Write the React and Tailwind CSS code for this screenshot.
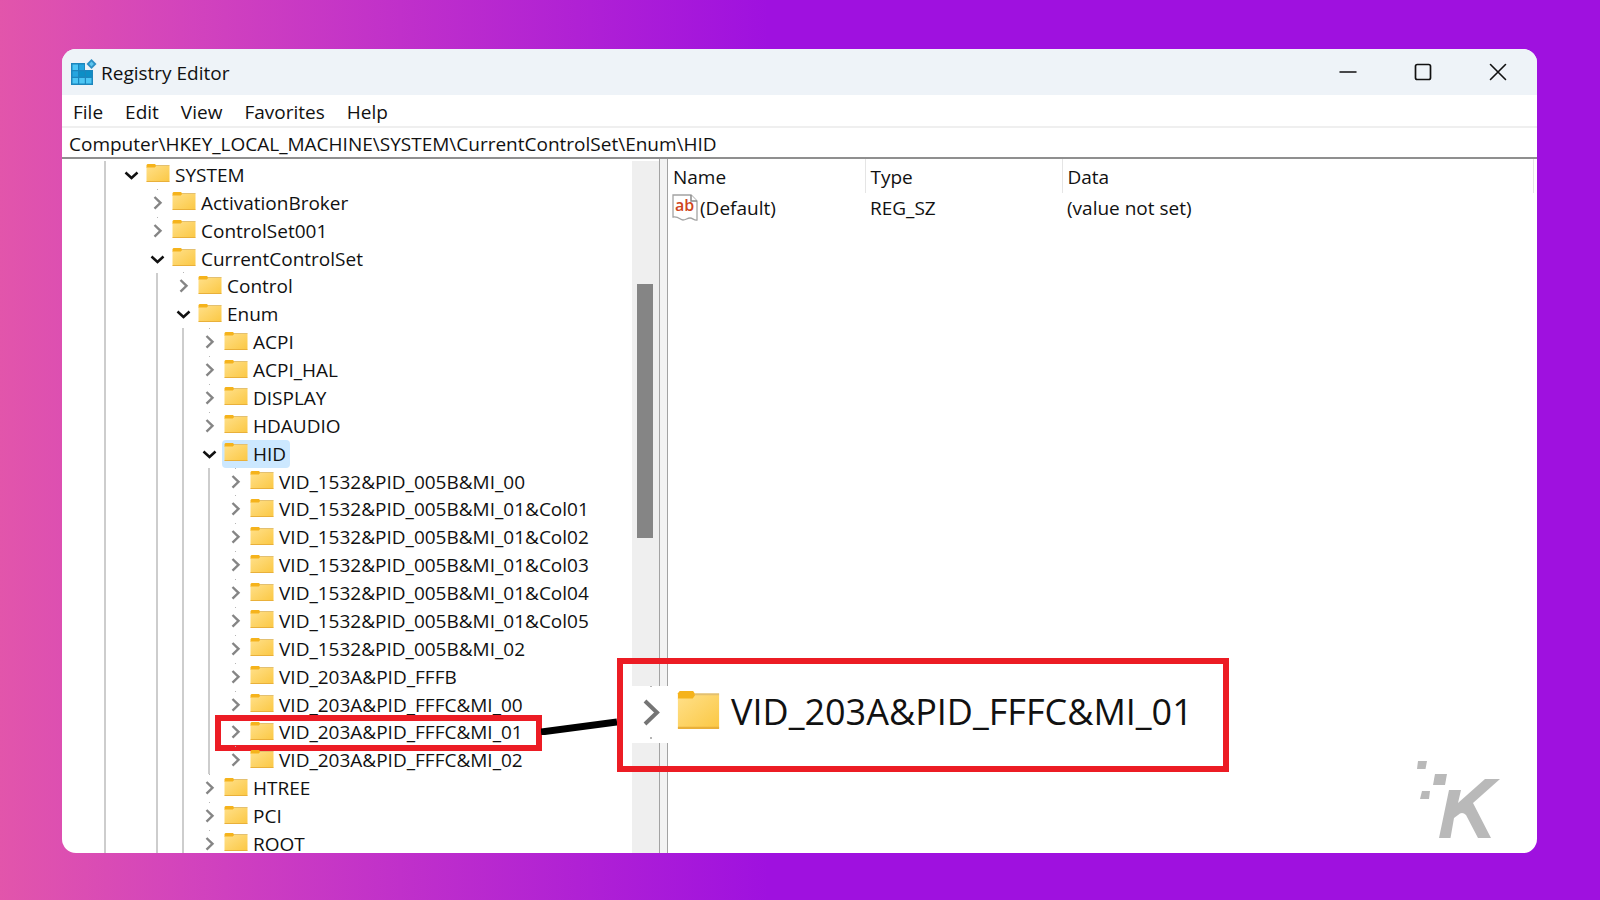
import React from "react";

const menuItems = ["File", "Edit", "View", "Favorites", "Help"];

const treeRows = [
  { name: "SYSTEM", depth: 0, open: true },
  { name: "ActivationBroker", depth: 1 },
  { name: "ControlSet001", depth: 1 },
  { name: "CurrentControlSet", depth: 1, open: true },
  { name: "Control", depth: 2 },
  { name: "Enum", depth: 2, open: true },
  { name: "ACPI", depth: 3 },
  { name: "ACPI_HAL", depth: 3 },
  { name: "DISPLAY", depth: 3 },
  { name: "HDAUDIO", depth: 3 },
  { name: "HID", depth: 3, open: true, selected: true },
  { name: "VID_1532&PID_005B&MI_00", depth: 4 },
  { name: "VID_1532&PID_005B&MI_01&Col01", depth: 4 },
  { name: "VID_1532&PID_005B&MI_01&Col02", depth: 4 },
  { name: "VID_1532&PID_005B&MI_01&Col03", depth: 4 },
  { name: "VID_1532&PID_005B&MI_01&Col04", depth: 4 },
  { name: "VID_1532&PID_005B&MI_01&Col05", depth: 4 },
  { name: "VID_1532&PID_005B&MI_02", depth: 4 },
  { name: "VID_203A&PID_FFFB", depth: 4 },
  { name: "VID_203A&PID_FFFC&MI_00", depth: 4 },
  { name: "VID_203A&PID_FFFC&MI_01", depth: 4, marked: true },
  { name: "VID_203A&PID_FFFC&MI_02", depth: 4 },
  { name: "HTREE", depth: 3 },
  { name: "PCI", depth: 3 },
  { name: "ROOT", depth: 3 },
];

const RegistryIcon = () => (
  <svg viewBox="0 0 26 26" className="h-[26px] w-[26px]" aria-hidden="true">
    <path d="M0 4h14v7h8v15H0z" fill="#1c86bd" />
    <path d="M1.500 5.500h5.500v5.500H1.500zM1.500 19h5.500v5.500H1.500zM8.200 19h5.600v5.500H8.200zM15 19h5.500v5.500H15z" fill="#4cc6f5" />
    <path d="M8.200 5.500h5v5.500h-5zM1.500 12.200h5.500v5.600H1.500z" fill="#25a5df" />
    <path d="M8.200 12.200h5.600v5.600H8.200zM15 12.200h5.500v5.600H15z" fill="#0c8fc6" />
    <path d="M20.500 0l5 5-5 5-5-5z" fill="#2c8fc4" />
    <path d="M20.500 2.600l2.400 2.400-2.400 2.400-2.400-2.400z" fill="#5cc4ee" />
  </svg>
);

const FolderIcon = ({ id, className }) => (
  <svg viewBox="0 0 24 20" preserveAspectRatio="none" className={className} aria-hidden="true">
    <defs>
      <linearGradient id={id} x1="0" y1="0" x2="1" y2="1">
        <stop offset="0" stopColor="#ffe08a" />
        <stop offset="1" stopColor="#fbc844" />
      </linearGradient>
    </defs>
    <path d="M1.500 1h7.500l1.200 1.500V5H0.500V2z" fill="#f5b31c" />
    <path d="M0.500 4.500h8.300l1.700-2H23a0.500 0.500 0 0 1 .5.5v15.500H0.500z" fill={`url(#${id})`} />
    <path d="M10.200 2h13.300v1H9.600z" fill="#e3c070" />
    <path d="M0.500 18h23v1h-23z" fill="#e9b03a" />
  </svg>
);

const Chevron = ({ open }) => (
  <svg viewBox="0 0 26 28" className="h-7 w-[26px]" fill="none" aria-hidden="true">
    {open ? (
      <path d="M7.500 11.500l6 5.500 6-5.500" stroke="#111" strokeWidth="2.500" />
    ) : (
      <>
        <path d="M10.500 8l6 5.800-6 5.800" stroke="#858585" strokeWidth="2.400" />
        <path d="M13 0h1v1h-1z" fill="#b5b5b5" />
      </>
    )}
  </svg>
);

const Guide = ({ line }) => (
  <span className="flex w-[26px] shrink-0 justify-center self-stretch">
    {line && <span className="w-0.5 bg-[#cdcdcd]" />}
  </span>
);

const TreeRow = ({ row, index }) => (
  <li
    role="treeitem"
    aria-expanded={Boolean(row.open)}
    aria-selected={Boolean(row.selected)}
    className="relative flex min-h-0 flex-1 items-center pl-[30px]"
  >
    <Guide line />
    {Array.from({ length: row.depth }, (_, level) => (
      <Guide key={level} line={level > 0} />
    ))}
    <button type="button" aria-label={`Toggle ${row.name}`} className="shrink-0">
      <Chevron open={row.open} />
    </button>
    <span
      className={
        row.selected
          ? "flex h-7 items-center gap-[5px] rounded-sm bg-[#cce8ff] pr-1 pl-0.5"
          : "flex h-7 items-center gap-[5px] pr-1 pl-0.5"
      }
    >
      <FolderIcon id={`folder-${index}`} className="mb-[3px] h-5 w-6 shrink-0" />
      <span className="leading-4 whitespace-nowrap">{row.name}</span>
    </span>
    {row.marked && (
      <>
        <span className="absolute -top-1 -bottom-[5px] left-[153px] w-[327px] border-[6px] border-[#ec1c24]" />
        <svg viewBox="0 0 76 24" className="absolute -top-2 left-[479px] h-6 w-[76px]" aria-hidden="true">
          <path d="M0 21L76 11" stroke="#000" strokeWidth="7" />
        </svg>
      </>
    )}
  </li>
);

const StringValueIcon = () => (
  <svg viewBox="0 0 26 28" className="h-7 w-[26px] shrink-0" aria-hidden="true">
    <path
      d="M1 1h18l6 6v19c-3 .8-4-2-7-2s-4 2-7 2-4-4-10-3z"
      fill="#fff"
      stroke="#a3a3a3"
      strokeWidth="1.300"
    />
    <path d="M19 1v6h6" fill="#fff" stroke="#8a8a8a" strokeWidth="1.500" />
    <text x="3" y="17" fontSize="16" fontWeight="600" fill="#cf4520">
      ab
    </text>
  </svg>
);

const TitleBar = () => (
  <header className="flex h-[46px] shrink-0 items-center bg-[#eef3f8] pr-0.5 pl-[9px]">
    <RegistryIcon />
    <h1 className="flex-1 pt-0.5 pl-1">Registry Editor</h1>
    <button type="button" aria-label="Minimize" className="flex h-full w-[75px] items-center justify-center">
      <svg viewBox="0 0 18 18" className="h-[18px] w-[18px]" aria-hidden="true">
        <path d="M1 9h16" stroke="#111" strokeWidth="1.500" strokeLinecap="round" />
      </svg>
    </button>
    <button type="button" aria-label="Maximize" className="flex h-full w-[75px] items-center justify-center">
      <svg viewBox="0 0 18 18" className="h-[18px] w-[18px]" aria-hidden="true">
        <rect x="1.500" y="1.500" width="15" height="15" rx="1.800" fill="none" stroke="#111" strokeWidth="1.700" />
      </svg>
    </button>
    <button type="button" aria-label="Close" className="flex h-full w-[75px] items-center justify-center">
      <svg viewBox="0 0 18 18" className="h-[18px] w-[18px]" aria-hidden="true">
        <path d="M1.500 1.500l15 15M16.500 1.500l-15 15" stroke="#111" strokeWidth="1.600" strokeLinecap="round" />
      </svg>
    </button>
  </header>
);

const ValueTable = () => (
  <table className="w-full table-fixed border-collapse text-left">
    <colgroup>
      <col className="w-[197px]" />
      <col className="w-[197px]" />
      <col />
    </colgroup>
    <thead>
      <tr className="h-[34px]">
        <th className="border-r border-[#e5e5e5] pt-0.5 pl-[5px] font-normal">Name</th>
        <th className="border-r border-[#e5e5e5] pt-0.5 pl-[5px] font-normal">Type</th>
        <th className="border-r border-[#e5e5e5] pt-0.5 pl-[5px] font-normal">Data</th>
      </tr>
    </thead>
    <tbody>
      <tr className="h-[30px]">
        <td className="pl-1">
          <span className="flex items-center gap-0.5">
            <StringValueIcon />
            (Default)
          </span>
        </td>
        <td className="pl-[5px]">REG_SZ</td>
        <td className="pl-[5px]">(value not set)</td>
      </tr>
    </tbody>
  </table>
);

/* Enlarged copy of the marked key, laid over both panes */
const Callout = () => (
  <aside className="absolute bottom-[81px] left-[555px] flex h-[114px] w-[612px] items-center border-[6px] border-[#ec1c24] pb-0.5 pl-[9px]">
    <span className="flex h-[57px] w-full items-center bg-white">
      <svg viewBox="0 0 38 57" className="h-[57px] w-[38px] shrink-0" fill="none" aria-hidden="true">
        <path d="M13 15l12 11.500L13 38" stroke="#757575" strokeWidth="4" />
        <path d="M18 0h2v1h-2zM18 51h2v2h-2z" fill="#b5b5b5" />
      </svg>
      <FolderIcon id="folder-callout" className="mb-2 ml-[7px] h-[42px] w-[43px] shrink-0" />
      <span className="pb-1 pl-[11px] text-[36px] leading-none whitespace-nowrap">VID_203A&PID_FFFC&MI_01</span>
    </span>
  </aside>
);

const Watermark = () => (
  <svg viewBox="0 0 84 80" className="absolute right-9 bottom-3.5 h-20 w-[84px]" fill="#b9b9b9" aria-hidden="true">
    <path d="M1 2h9l-1.500 8H0z" />
    <path d="M18 15h12l-2 11H16z" />
    <path d="M5 32h8l-1 8H3z" />
    <path d="M32 31h12l-3 13 27-24h15L56 44l18 35H61L49 56q-4-4-8 0l-4 3-3.500 20H22z" />
  </svg>
);

const App = () => {
  return (
    <div className="flex h-screen min-h-[600px] flex-col bg-[linear-gradient(90deg,#e255ab_0%,#d243bd_12%,#c030ca_25%,#9f11df_48%)] pt-[49px] pr-[63px] pb-[47px] pl-[62px] font-['Open_Sans',sans-serif] text-[19px] leading-7 text-[#111]">
      <main className="relative flex min-h-0 flex-1 flex-col overflow-hidden rounded-[14px] bg-white">
        <TitleBar />

        {/* Menu */}
        <nav className="flex h-[33px] shrink-0 items-center gap-[22px] border-b-2 border-[#efefef] pt-0.5 pl-[11px]">
          {menuItems.map((item) => (
            <button key={item} type="button">
              {item}
            </button>
          ))}
        </nav>

        {/* Address bar */}
        <input
          type="text"
          aria-label="Address"
          defaultValue="Computer\HKEY_LOCAL_MACHINE\SYSTEM\CurrentControlSet\Enum\HID"
          className="h-[31px] w-full shrink-0 border-b-2 border-[#8f8f8f] pt-0.5 pl-[7px] outline-none"
        />

        <div className="flex min-h-0 flex-1">
          {/* Key tree */}
          <ul role="tree" className="-mb-[5px] flex w-[570px] shrink-0 flex-col pt-0.5">
            {treeRows.map((row, index) => (
              <TreeRow key={row.name} row={row} index={index} />
            ))}
          </ul>
          <div className="mt-0.5 flex w-[27px] shrink-0 flex-col items-start bg-[#efefef] pt-[123px] pl-[5px]">
            <div className="h-[254px] w-4 bg-[#858585]" />
          </div>
          <div className="w-[9px] shrink-0 border-x border-[#a3a3a3] bg-[#f3f3f3]" />

          {/* Values */}
          <section className="min-w-0 flex-1 pr-[3px]">
            <ValueTable />
          </section>
        </div>

        <Callout />
        <Watermark />
      </main>
    </div>
  );
};

export default App;
